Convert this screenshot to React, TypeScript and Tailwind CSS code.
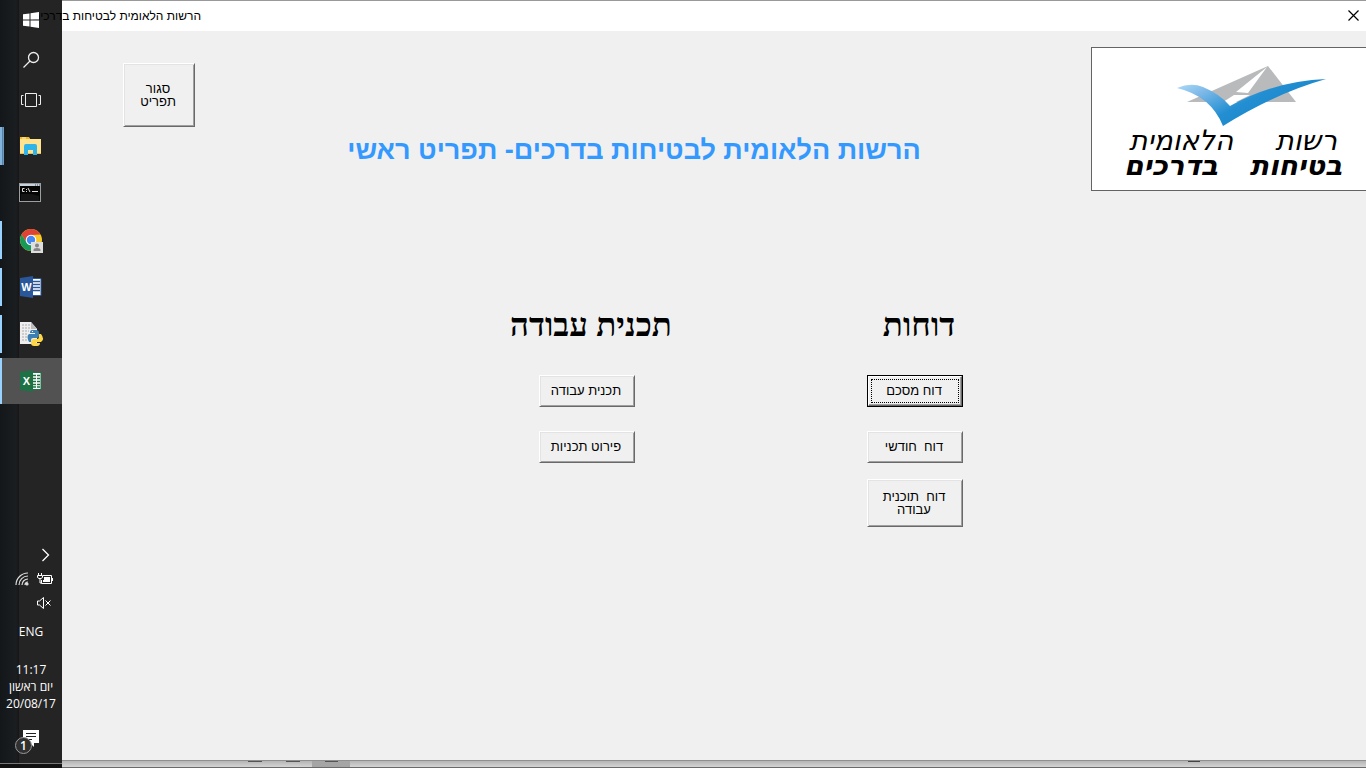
import type { ReactNode } from "react";

const face = "border border-t-white border-l-white border-b-[#696969] border-r-[#696969] bg-[#f0f0f0] shadow-[inset_1px_1px_0_#e3e3e3,inset_-1px_-1px_0_#a0a0a0]";

function PushButton({ children, className = "" }: { children: ReactNode; className?: string }) {
  return (
    <button
      type="button"
      dir="rtl"
      className={`${face} flex items-center justify-center whitespace-pre pb-px pr-[2px] text-center text-[13px] leading-[13px] text-black ${className}`}
    >
      {children}
    </button>
  );
}

function FocusedButton({ children }: { children: ReactNode }) {
  return (
    <button type="button" dir="rtl" className="h-8 w-24 border border-black bg-[#f0f0f0] text-[13px] leading-[13px] text-black">
      <span className="flex h-full border border-t-white border-l-white border-b-[#696969] border-r-[#696969] p-[2px] shadow-[inset_-1px_-1px_0_#a0a0a0]">
        <span className="flex flex-1 items-center justify-center border border-dotted border-black pb-[2px] pr-[2px]">{children}</span>
      </span>
    </button>
  );
}

function TaskButton({ label, mark = "none", active = false, children }: { label: string; mark?: "none" | "one" | "many"; active?: boolean; children: ReactNode }) {
  return (
    <button type="button" aria-label={label} className={`flex h-[46px] w-full items-center ${active ? "bg-[#525252]" : ""}`}>
      <span className={`flex w-[19px] ${active ? "h-[46px]" : "h-[38px]"}`}>
        {mark === "many" && <span className="w-[3px] border-r border-[#5a82a5] bg-[#83b4dc]" />}
        {mark === "many" && <span className="w-px bg-[#6b9ac2]" />}
        {mark === "one" && <span className="w-[2px] bg-[#99d1ff]" />}
      </span>
      {children}
    </button>
  );
}

const ExplorerIcon = () => (
  <svg width="24" height="24" viewBox="0 0 24 24" aria-hidden="true">
    <path d="M1 3h9l1 2h11v15H1z" fill="#ffe391" />
    <path d="M1 3h9v2H1z" fill="#f5b912" />
    <path d="M3 3.500h4v1H3z" fill="#fff3c4" />
    <path d="M1 19h21v1H1z" fill="#e9bf58" />
    <path d="M5 12q0-2 2-2h9q2 0 2 2v9h-4v-5H9v5H5z" fill="#2fb4ea" />
  </svg>
);

const TerminalIcon = () => (
  <svg width="24" height="24" viewBox="0 0 24 24" aria-hidden="true">
    <rect x="0.5" y="2.5" width="21" height="18" fill="#050505" stroke="#9a9fa3" />
    <path d="M1 3h20v2H1z" fill="#c9d3dc" />
    <path d="M16 4h1m1 0h1m1 0h1" stroke="#3c5068" />
    <path d="M5.500 7.500H3.500v3h2M7.500 8v1M7.500 10v1M9 7l2 4M13 10.500h6" stroke="#ddd" fill="none" />
    <path d="M2 13Q12 12 20 15v5H2z" fill="#151515" />
  </svg>
);

const ChromeIcon = () => (
  <svg width="26" height="26" viewBox="0 0 26 26" aria-hidden="true">
    <circle cx="12" cy="13" r="11" fill="#f7c92b" />
    <path d="M2.500 7.500A11 11 0 0 1 21.500 7.500L12 8 7.700 15.500z" fill="#df4335" />
    <path d="M2.500 7.500A11 11 0 0 0 12 24L16.300 15.500 7.700 15.500z" fill="#179958" />
    <circle cx="12" cy="13" r="5.300" fill="#fff" />
    <circle cx="12" cy="13" r="4.200" fill="#4688f4" />
    <path d="M12 15h12v11H12z" fill="#dedede" />
    <circle cx="18" cy="18.500" r="2" fill="#858585" />
    <path d="M14.500 24v-1q0-2 3.500-2t3.500 2v1z" fill="#858585" />
  </svg>
);

function OfficeIcon({ letter, color, sheet }: { letter: string; color: string; sheet: boolean }) {
  return (
    <svg width="24" height="24" viewBox="0 0 24 24" aria-hidden="true">
      <path d="M12 3.500h10v17H12z" fill="#fff" stroke={color} />
      {sheet ? (
        <path d="M14 6.500h3m1 0h3M14 9.500h3m1 0h3M14 12.500h3m1 0h3M14 15.500h3m1 0h3M14 18h3m1 0h3" stroke={color} strokeWidth="1.500" />
      ) : (
        <path d="M13 6.500h8M13 9.500h8M13 12.500h8M13 15.500h8" stroke={color} strokeWidth="1.300" />
      )}
      <path d="M1 3 14 1v22L1 21z" fill={color} />
      <text x="7.500" y="16" textAnchor="middle" fontSize="11" fontWeight="700" fill="#fff">{letter}</text>
    </svg>
  );
}

const PythonFileIcon = () => (
  <svg width="26" height="26" viewBox="0 0 26 26" aria-hidden="true">
    <path d="M1 1h11l6 7v15H1z" fill="#eee" />
    <path d="M12 1v7h6z" fill="#bcbcbc" />
    <path d="M3 4h8M3 7h8M3 10h7M3 13h5M3 16h5M3 19h7" stroke="#aaa" strokeDasharray="2 1" />
    <path d="M13 9h4q3 0 3 3v3q0 2-2 2h-4q-2 0-2 2v2H10q-3-6 0-8h6v-1h-5q0-3 2-3z" fill="#3c7fb5" />
    <path d="M20 13h2q4 5 0 8h-5v1h4q0 3-3 3h-3q-3 0-3-3 0-4 3-4h3q2 0 2-2z" fill="#ffd645" />
    <path d="M13 10h1v1h-1z" fill="#fff" />
  </svg>
);

function Taskbar() {
  return (
    <nav aria-label="Taskbar" className="flex w-[62px] shrink-0 flex-col bg-[linear-gradient(90deg,#14171a_0px,#1b1e20_16px,#151617_19px,#242424_19px)] text-white">
      <button type="button" aria-label="Start" className="z-10 flex h-10 items-center justify-center">
        <svg width="16" height="16" viewBox="0 0 16 16" fill="#fff" aria-hidden="true">
          <path d="M0 2.300 6.500 1.400V7.500H0zM7.500 1.200 16 0v7.500H7.500zM0 8.500h6.500v6.100L0 13.700zM7.500 8.500H16V16l-8.500-1.200z" />
        </svg>
      </button>
      <button type="button" aria-label="Search" className="flex h-10 items-center justify-center">
        <svg width="18" height="18" viewBox="0 0 18 18" fill="none" stroke="#eee" strokeWidth="1.300" aria-hidden="true">
          <circle cx="11.500" cy="6.500" r="5" /><path d="M8 10 1.500 16.500" />
        </svg>
      </button>
      <button type="button" aria-label="Task view" className="flex h-10 items-center justify-center">
        <svg width="20" height="15" viewBox="0 0 20 15" fill="none" stroke="#eee" aria-hidden="true">
          <path d="M4.500.5h11v13h-11zM2.500 2.500H.5v9h2M17.500 2.500h2v9h-2" />
        </svg>
      </button>
      <div className="flex flex-col gap-px pt-[3px]">
        <TaskButton label="File Explorer" mark="many"><ExplorerIcon /></TaskButton>
        <TaskButton label="Command Prompt"><TerminalIcon /></TaskButton>
        <TaskButton label="Chrome" mark="one"><ChromeIcon /></TaskButton>
        <TaskButton label="Word" mark="one"><OfficeIcon letter="W" color="#2a569a" sheet={false} /></TaskButton>
        <TaskButton label="Python" mark="one"><PythonFileIcon /></TaskButton>
        <TaskButton label="Excel" mark="one" active><OfficeIcon letter="X" color="#1e7145" sheet /></TaskButton>
      </div>
      <div className="mt-auto flex flex-col">
        <button type="button" aria-label="Show hidden icons" className="flex h-6 items-center justify-end pr-3">
          <svg width="9" height="14" viewBox="0 0 9 14" fill="none" stroke="#fff" strokeWidth="1.300" aria-hidden="true"><path d="m1.500 1 6 6-6 6" /></svg>
        </button>
        <div className="flex h-6 items-center justify-end gap-2 pr-2">
          <svg width="14" height="14" viewBox="0 0 14 14" fill="none" stroke="#ddd" strokeWidth="1.200" role="img" aria-label="Wi-Fi">
            <path d="M1 13A12 12 0 0 1 13 1M4 13a9 9 0 0 1 9-9M7 13a6 6 0 0 1 6-6M10 13a3 3 0 0 1 3-3" /><circle cx="12" cy="12" r="1" fill="#fff" />
          </svg>
          <svg width="17" height="12" viewBox="0 0 17 12" fill="none" stroke="#fff" role="img" aria-label="Battery charging">
            <path d="M6 2.500h8.500v8h-10V7M15.500 5v3M1.500 0v2M4.500 0v2M.5 2.500h5v2l-1.500 1H2l-1.500-1zM3 6v4h1.500" /><path d="M7 4h6v5H6V7h1z" fill="#fff" stroke="none" />
          </svg>
        </div>
        <div className="flex h-6 items-center justify-end pr-[10px]">
          <svg width="16" height="12" viewBox="0 0 16 12" fill="none" stroke="#fff" role="img" aria-label="Muted">
            <path d="M1.500 4h2L7.500.5v11l-4-3.500h-2zM9.500 3.500l5 5M14.500 3.500l-5 5" />
          </svg>
        </div>
        <button type="button" className="mt-[7px] h-5 font-['Open_Sans',sans-serif] text-xs leading-5">ENG</button>
        <div className="mt-[19px] whitespace-nowrap text-center font-['Open_Sans',sans-serif] text-xs leading-[17px]">
          <p>11:17</p>
          <p dir="rtl">יום ראשון</p>
          <p>20/08/17</p>
        </div>
        <button type="button" aria-label="Notifications" className="mt-[18px] flex h-7 justify-center">
          <span className="relative">
            <svg width="16" height="17" viewBox="0 0 16 17" aria-hidden="true">
              <path d="M0 0h16v13h-5v4l-4-4H0z" fill="#fff" /><path d="M3 3.500h10M3 6.500h10M3 9.500h6" stroke="#222" />
            </svg>
            <span className="absolute -left-2 top-[7px] flex size-[17px] items-center justify-center rounded-full border border-[#999] bg-[#303030] font-['Open_Sans',sans-serif] text-xs font-semibold leading-none">1</span>
          </span>
        </button>
        <div className="mt-[5px] h-[5px] border-t border-[#777] bg-[#111]" />
      </div>
    </nav>
  );
}

function Logo() {
  return (
    <div className="mt-4 h-36 w-[275px] shrink-0 overflow-hidden border border-r-0 border-[#646464] bg-white">
      <svg className="ml-[84px] mt-[16px] block" width="154" height="64" viewBox="0 0 154 64" role="img" aria-label="הרשות הלאומית לבטיחות בדרכים">
        <defs>
          <linearGradient id="tick" x1="0" y1="0" x2="1" y2="0.600">
            <stop offset="0" stopColor="#b9e3fb" />
            <stop offset="0.250" stopColor="#7db9e8" />
            <stop offset="0.550" stopColor="#238fd2" />
            <stop offset="1" stopColor="#1682c8" />
          </linearGradient>
        </defs>
        <path d="M11 38 92 2l28 36z" fill="#b8babc" />
        <path d="M91 3 60 28l12 1zM58 31h16l-20 10-10-1z" fill="#fff" />
        <path d="M1 24Q15 18 27 23q17 7 27 19Q99 17 150 15 100 29 47 62 35 32 1 24z" fill="url(#tick)" />
      </svg>
      <div dir="rtl" className="flex flex-col whitespace-nowrap pl-4 pr-2 font-['DejaVu_Sans',sans-serif] leading-[25px] text-black">
        <p className="flex justify-around text-[28px] italic leading-[25px]">
          <span>רשות</span> <span>הלאומית</span>
        </p>
        <p className="flex justify-around text-[28px] font-bold italic leading-[25px]">
          <span>בטיחות</span> <span>בדרכים</span>
        </p>
      </div>
    </div>
  );
}

export default function App() {
  return (
    <div className="flex min-h-screen bg-[#f0f0f0] font-['Liberation_Sans',Arial,sans-serif]">
      <Taskbar />
      <div className="flex min-w-0 flex-1 flex-col border-t border-[#999]">
        <header className="flex h-[30px] items-center justify-between bg-white">
          <div className="flex w-[139px] justify-end">
            <span dir="rtl" className="whitespace-nowrap text-xs text-black">הרשות הלאומית לבטיחות בדרכים</span>
          </div>
          <button type="button" aria-label="Close" className="p-[7px] pb-[9px]">
            <svg width="11" height="11" viewBox="0 0 11 11" stroke="#000" strokeWidth="1.200" aria-hidden="true"><path d="m.5.5 10 10M10.500.5l-10 10" /></svg>
          </button>
        </header>
        <main className="flex-1">
          <div className="flex items-start pl-[61px]">
            <PushButton className="mt-8 h-16 w-[72px] shrink-0">{"סגור\nתפריט"}</PushButton>
            <h1 dir="rtl" className="mt-[103px] flex-1 pr-[18px] text-center text-[27px] font-bold leading-8 text-[#3399ff]">
              הרשות הלאומית לבטיחות בדרכים- תפריט ראשי
            </h1>
            <Logo />
          </div>
          <div className="mt-[116px] flex gap-40 pl-[441px]">
            <section className="flex w-[168px] flex-col items-center">
              <h2 dir="rtl" className="whitespace-nowrap pl-2 font-['Liberation_Serif',serif] text-[33px] font-bold leading-9">תכנית עבודה</h2>
              <PushButton className="mt-8 h-8 w-24">תכנית עבודה</PushButton>
              <PushButton className="mt-6 h-8 w-24">פירוט תכניות</PushButton>
            </section>
            <section className="flex w-[168px] flex-col items-center">
              <h2 dir="rtl" className="whitespace-nowrap pl-2 font-['Liberation_Serif',serif] text-[33px] font-bold leading-9">דוחות</h2>
              <div className="mt-8 flex"><FocusedButton>דוח מסכם</FocusedButton></div>
              <PushButton className="mt-6 h-8 w-24">{"דוח  חודשי"}</PushButton>
              <PushButton className="mt-4 h-12 w-24">{"דוח  תוכנית\nעבודה"}</PushButton>
            </section>
          </div>
        </main>
        <footer className="flex h-2 items-start border-b border-t border-b-[#6a6a6a] border-t-[#8f8f8f] bg-linear-to-b from-[#b5b5b5] to-[#d4d4d4]">
          <span className="ml-[186px] h-px w-[14px] bg-[#555]" />
          <span className="ml-6 h-px w-[14px] bg-[#555]" />
          <span className="ml-3 flex h-[6px] w-[38px] justify-center bg-[#a5a5a5]"><span className="h-px w-[13px] bg-[#555]" /></span>
          <span className="ml-auto mr-[166px] h-px w-3 bg-[#444]" />
        </footer>
      </div>
    </div>
  );
}
